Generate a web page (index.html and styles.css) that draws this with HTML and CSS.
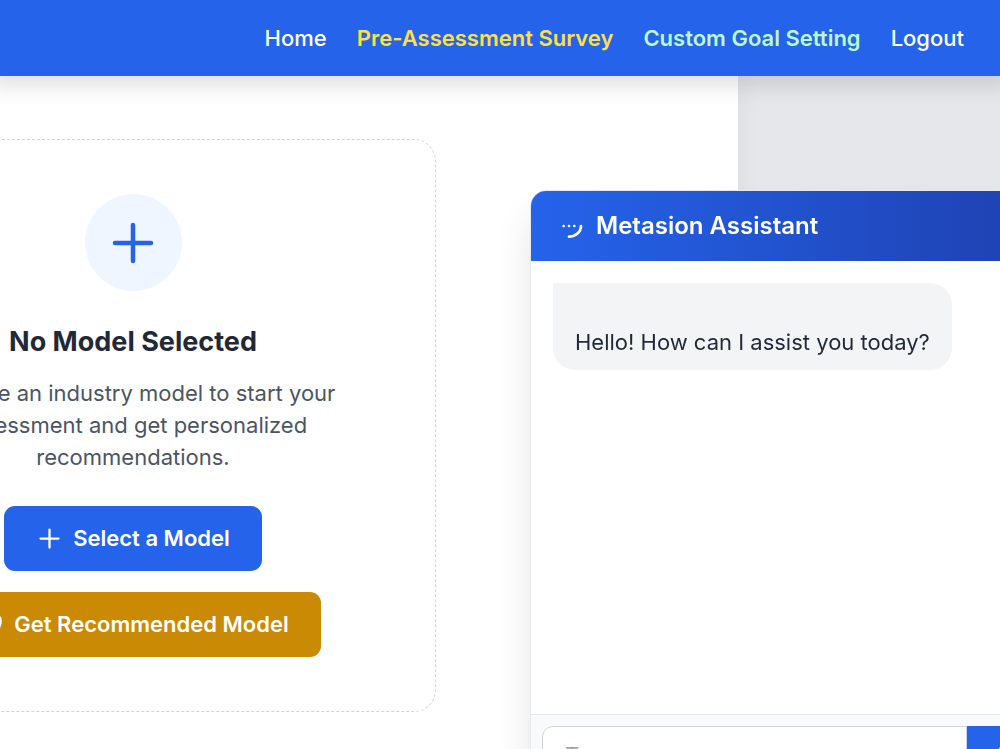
FILE: index.html
```
<!DOCTYPE html>
<html lang="en">
<head>
  <meta charset="UTF-8">
  <meta name="viewport" content="width=device-width, initial-scale=1.0">
  <title>Metasion</title>
  <link rel="stylesheet" href="styles.css">
</head>
<body>
  <header class="navbar">
    <nav class="nav-links">
      <a href="#">Home</a>
      <a href="#" class="nav-survey">Pre-Assessment Survey</a>
      <a href="#" class="nav-goals">Custom Goal Setting</a>
      <a href="#">Logout</a>
    </nav>
  </header>

  <main class="panel">
    <!-- Empty state -->
    <section class="empty-card">
      <div class="empty-icon">
        <svg viewBox="0 0 24 24"><path d="M12 4v16m8-8H4"/></svg>
      </div>
      <h2>No Model Selected</h2>
      <p>Choose an industry model to start your assessment and get personalized recommendations.</p>
      <div class="actions">
        <button type="button" class="btn btn-primary">
          <svg viewBox="0 0 24 24"><path d="M12 4v16m8-8H4"/></svg>
          Select a Model
        </button>
        <button type="button" class="btn btn-gold">
          <svg viewBox="0 0 24 24"><path d="M9 12l2 2 4-4m5.618-4.016A11.955 11.955 0 0112 2.944a11.955 11.955 0 01-8.618 3.04A12.02 12.02 0 003 9c0 5.591 3.824 10.29 9 11.622 5.176-1.332 9-6.03 9-11.622 0-1.042-.133-2.052-.382-3.016z"/></svg>
          Get Recommended Model
        </button>
      </div>
    </section>
  </main>

  <!-- Chat window -->
  <aside class="chat">
    <div class="chat-header">
      <svg viewBox="0 0 24 24"><path d="M8 12h.01M12 12h.01M16 12h.01M21 12c0 4.418-4.03 8-9 8"/></svg>
      <h3>Metasion Assistant</h3>
    </div>
    <div class="chat-messages">
      <div class="message">Hello! How can I assist you today?</div>
    </div>
    <form class="chat-form">
      <input type="text" placeholder="Type a message..." aria-label="Message">
      <button type="button" aria-label="Send">
        <svg viewBox="0 0 24 24"><path d="M12 19l9 2-9-18-9 18 9-2zm0 0v-8"/></svg>
      </button>
    </form>
  </aside>
</body>
</html>
```
FILE: styles.css
```
* {
  box-sizing: border-box;
}

body {
  margin: 0;
  min-height: 100vh;
  display: flex;
  flex-direction: column;
  overflow: hidden;
  font-family: Inter, "Liberation Sans", sans-serif;
  font-size: 22px;
  line-height: 32px;
  background: #e5e7eb;
}

h2, h3, p {
  margin: 0;
}

svg {
  flex-shrink: 0;
  fill: none;
  stroke: currentColor;
  stroke-width: 2;
  stroke-linecap: round;
  stroke-linejoin: round;
}

/* Navbar */
.navbar {
  position: relative;
  z-index: 5;
  padding: 22px 36px;
  background: #2563eb;
  box-shadow: 0 0 20px 10px rgba(0,0,0,0.12);
}

.nav-links {
  display: flex;
  justify-content: flex-end;
  gap: 30px;
}

.nav-links a {
  color: white;
  font-weight: 500;
  text-decoration: none;
  white-space: nowrap;
}

.nav-links .nav-survey {
  color: #fde047;
  font-weight: 600;
}

.nav-links .nav-goals {
  color: #bbf7d0;
  font-weight: 600;
}

/* Main panel */
.panel {
  flex: 1;
  margin-right: 262px;
  padding: 63px 302px 37px 0;
  background: white;
  box-shadow: 0 0 24px rgba(0,0,0,0.06);
}

.empty-card {
  display: flex;
  flex-direction: column;
  align-items: center;
  margin-left: -170px;
  padding: 54px;
  border: 1px dashed #d1d5db;
  border-radius: 22px;
  text-align: center;
}

.empty-icon {
  display: flex;
  align-items: center;
  justify-content: center;
  width: 97px;
  height: 97px;
  margin-bottom: 32px;
  border-radius: 50%;
  background: #eff6ff;
  color: #2563eb;
}

.empty-icon svg {
  width: 54px;
}

.empty-card h2 {
  margin-bottom: 16px;
  font-size: 27px;
  line-height: 38px;
  font-weight: 700;
  color: #1f2937;
}

.empty-card p {
  max-width: 432px;
  margin-bottom: 33px;
  color: #4b5563;
}

.actions {
  display: flex;
  flex-direction: column;
  align-items: center;
  gap: 21px;
}

.btn {
  display: flex;
  align-items: center;
  gap: 10px;
  padding: 16px 32px;
  border: none;
  border-radius: 11px;
  color: white;
  font: inherit;
  font-weight: 600;
  line-height: 33px;
  cursor: pointer;
}

.btn svg {
  width: 27px;
}

.btn-primary {
  background: #2563eb;
}

.btn-gold {
  background: #ca8a04;
}

/* Chat */
.chat {
  position: fixed;
  right: -50px;
  bottom: -46px;
  z-index: 10;
  display: flex;
  flex-direction: column;
  width: 520px;
  height: 605px;
  overflow: hidden;
  border: 1px solid #e5e7eb;
  border-radius: 16px;
  background: white;
  box-shadow: 0 26px 36px rgba(0,0,0,0.1);
}

.chat-header {
  display: flex;
  align-items: center;
  gap: 11px;
  padding: 19px 22px;
  background: linear-gradient(to right, #2563eb, #1e40af);
  color: white;
}

.chat-header svg {
  width: 32px;
}

.chat-header h3 {
  font-size: 24px;
  font-weight: 600;
}

.chat-messages {
  flex: 1;
  padding: 22px;
}

.message {
  width: fit-content;
  padding: 43px 22px 12px;
  border-radius: 0 22px 22px 22px;
  background: #f3f4f6;
  color: #1f2937;
}

.chat-form {
  display: flex;
  padding: 11px;
  border-top: 1px solid #e5e7eb;
  background: #f9fafb;
}

.chat-form input {
  flex: 1;
  min-width: 0;
  height: 57px;
  padding: 0 22px;
  border: 1px solid #d1d5db;
  border-radius: 11px 0 0 11px;
  background: white;
  font: inherit;
}

.chat-form input::placeholder {
  color: #9ca3af;
}

.chat-form button {
  padding: 0 22px;
  border: none;
  border-radius: 0 11px 11px 0;
  background: #2563eb;
  color: white;
}

.chat-form svg {
  display: block;
  width: 27px;
}
```
